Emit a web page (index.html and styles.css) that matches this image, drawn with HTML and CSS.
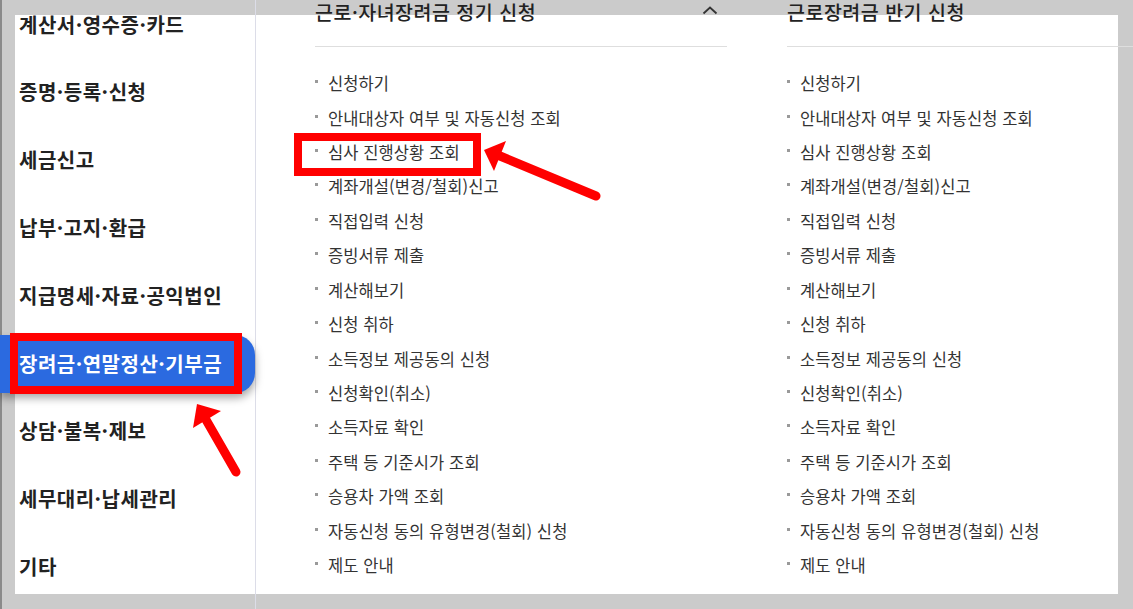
FILE: index.html
```html
<!DOCTYPE html>
<html lang="ko">
<head>
<meta charset="utf-8">
<title>장려금·연말정산·기부금</title>
<link rel="stylesheet" href="styles.css">
</head>
<body>
<div class="page">
  <nav class="side">
    <ul class="side-list">
      <li class="side-item">계산서·영수증·카드</li>
      <li class="side-item">증명·등록·신청</li>
      <li class="side-item">세금신고</li>
      <li class="side-item">납부·고지·환급</li>
      <li class="side-item">지급명세·자료·공익법인</li>
      <li class="side-item active"><span class="mark mark-side"></span>장려금·연말정산·기부금</li>
      <li class="side-item">상담·불복·제보</li>
      <li class="side-item">세무대리·납세관리</li>
      <li class="side-item">기타</li>
    </ul>
  </nav>
  <main class="content">
    <section class="col">
      <h2 class="col-head">근로·자녀장려금 정기 신청
        <svg class="chev" width="16" height="9" viewBox="0 0 16 9"><path d="M1.5 7.5 L8 1.5 L14.5 7.5" fill="none" stroke="#333" stroke-width="1.8"/></svg>
      </h2>
      <ul class="links">
        <li>신청하기</li>
        <li>안내대상자 여부 및 자동신청 조회</li>
        <li class="marked"><span class="mark mark-link"></span>심사 진행상황 조회</li>
        <li>계좌개설(변경/철회)신고</li>
        <li>직접입력 신청</li>
        <li>증빙서류 제출</li>
        <li>계산해보기</li>
        <li>신청 취하</li>
        <li>소득정보 제공동의 신청</li>
        <li>신청확인(취소)</li>
        <li>소득자료 확인</li>
        <li>주택 등 기준시가 조회</li>
        <li>승용차 가액 조회</li>
        <li>자동신청 동의 유형변경(철회) 신청</li>
        <li>제도 안내</li>
      </ul>
    </section>
    <section class="col">
      <h2 class="col-head">근로장려금 반기 신청</h2>
      <ul class="links">
        <li>신청하기</li>
        <li>안내대상자 여부 및 자동신청 조회</li>
        <li>심사 진행상황 조회</li>
        <li>계좌개설(변경/철회)신고</li>
        <li>직접입력 신청</li>
        <li>증빙서류 제출</li>
        <li>계산해보기</li>
        <li>신청 취하</li>
        <li>소득정보 제공동의 신청</li>
        <li>신청확인(취소)</li>
        <li>소득자료 확인</li>
        <li>주택 등 기준시가 조회</li>
        <li>승용차 가액 조회</li>
        <li>자동신청 동의 유형변경(철회) 신청</li>
        <li>제도 안내</li>
      </ul>
    </section>
  </main>
  <svg class="arrows" width="1133" height="609" viewBox="0 0 1133 609">
    <g stroke="#f00" stroke-width="9" stroke-linecap="round" fill="none">
      <line x1="596" y1="196" x2="500" y2="156"/>
      <line x1="236" y1="472" x2="205" y2="418"/>
    </g>
    <g fill="#f00">
      <polygon points="484,150 506,141 494,171"/>
      <polygon points="197,404 221,411 193,428"/>
    </g>
  </svg>
</div>
</body>
</html>
```
FILE: styles.css
```css
* { box-sizing: border-box; }
html, body { margin: 0; padding: 0; }
body {
  width: 1133px;
  height: 609px;
  overflow: hidden;
  font-family: "Noto Sans CJK KR", "Noto Sans", sans-serif;
  color: #222;
  background:
    linear-gradient(#8a8a8a, #8a8a8a) 0 0 / 2px 609px no-repeat,
    linear-gradient(#fff, #fff) 15px 15px / 1103px 579px no-repeat,
    #cbcbcb;
}
.page {
  position: relative;
  display: grid;
  grid-template-columns: 256px 1fr;
  height: 609px;
}
.side {
  border-right: 1px solid #dcdde8;
  height: 609px;
}
.side-list {
  list-style: none;
  margin: -5px 0 0;
  padding: 0;
  display: flex;
  flex-direction: column;
  gap: 9.75px;
}
.side-item {
  position: relative;
  height: 58px;
  display: flex;
  align-items: center;
  padding-left: 19px;
  font-size: 20px;
  font-weight: 700;
  letter-spacing: 0.5px;
  color: #222;
}
.side-item.active {
  background: #2b6ae0;
  color: #fff;
  border-radius: 0 20px 20px 0;
  box-shadow: 0 5px 8px rgba(0, 0, 0, 0.35);
  margin-top: 1px;
  margin-bottom: -1px;
}
.mark {
  position: absolute;
  border: 8px solid #f00;
}
.mark-side {
  left: 10px;
  right: 13px;
  top: -2px;
  bottom: -1px;
}
.content {
  display: grid;
  grid-template-columns: 412px 1fr;
  column-gap: 60px;
  padding-left: 59px;
  align-content: start;
}
.col-head {
  margin: 0;
  height: 47px;
  padding-top: 0;
  border-bottom: 1px solid #dedede;
  font-size: 19.5px;
  font-weight: 500;
  line-height: 24px;
  color: #222;
  display: flex;
  justify-content: space-between;
  align-items: flex-start;
  letter-spacing: 0.5px;
}
.chev {
  margin: 6px 9px 0 0;
}
.links {
  list-style: none;
  margin: 19px 0 0;
  padding: 0;
}
.links li {
  position: relative;
  display: flex;
  align-items: center;
  height: 34.43px;
  font-size: 16.5px;
  color: #333;
  letter-spacing: 0.1px;
}
.links li::before {
  content: "";
  width: 3px;
  height: 3px;
  background: #9a9a9a;
  margin: -3px 10px 0 0;
  flex: none;
}
.mark-link {
  left: -21px;
  top: -2px;
  width: 187px;
  height: 43px;
}
.arrows {
  position: absolute;
  left: 0;
  top: 0;
  pointer-events: none;
}
```
